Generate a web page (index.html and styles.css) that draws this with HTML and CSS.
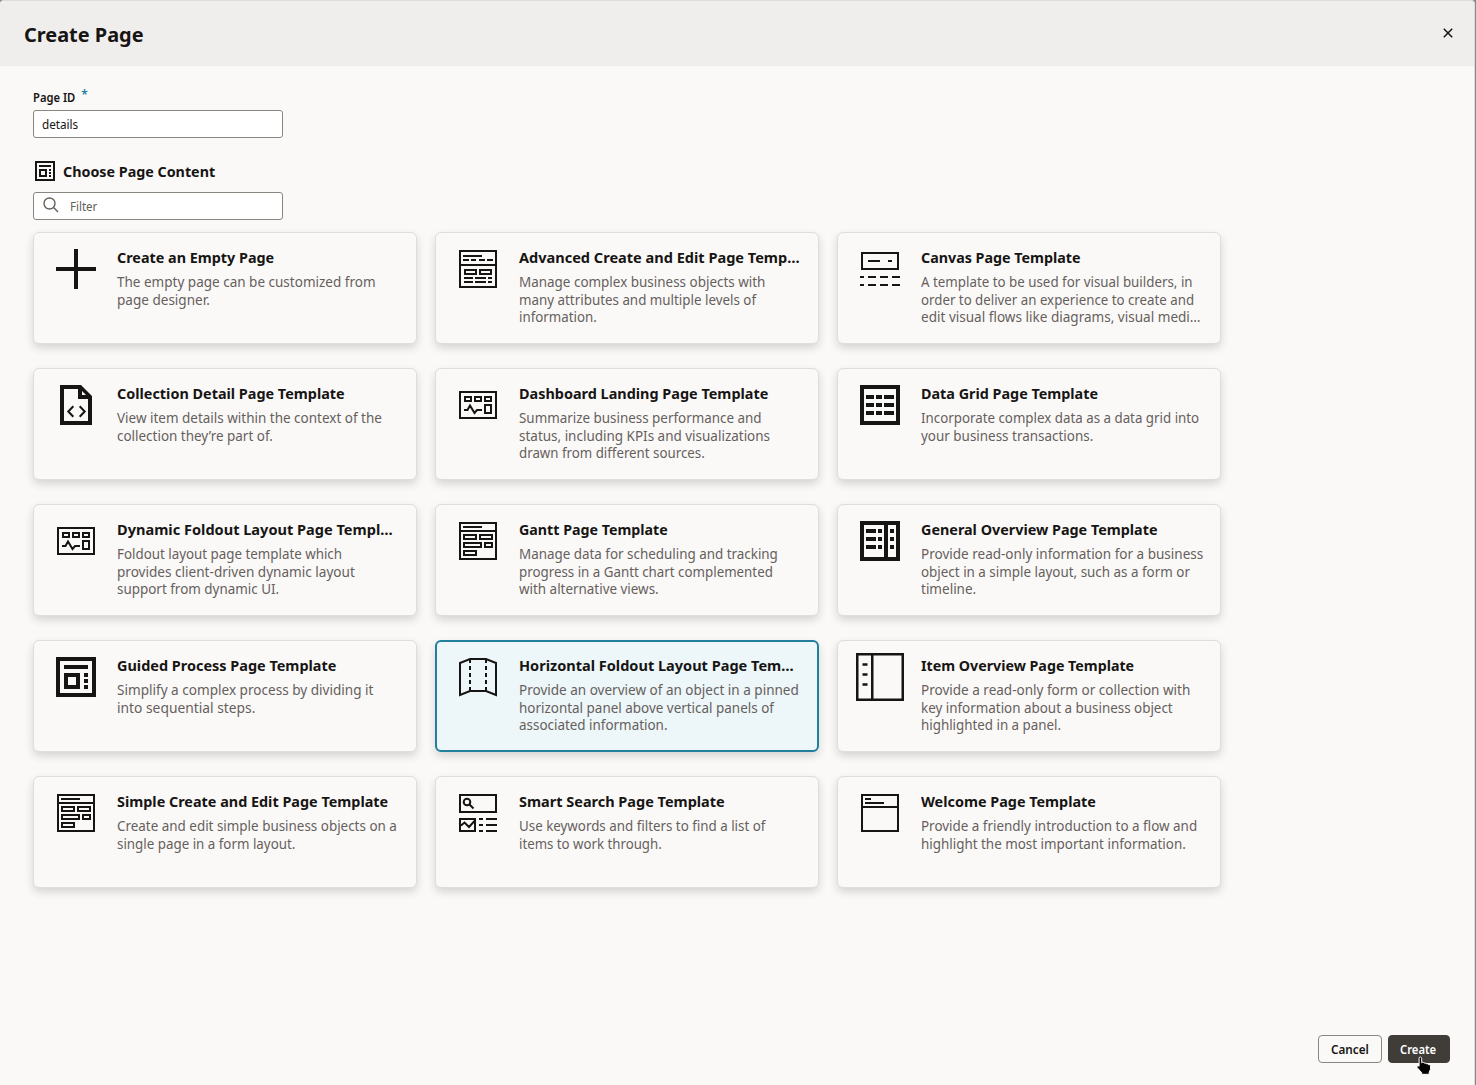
FILE: index.html
```html
<!DOCTYPE html>
<html lang="en">
<head>
<meta charset="utf-8">
<title>Create Page</title>
<link rel="stylesheet" href="styles.css">
</head>
<body>
<svg class="sprite" aria-hidden="true">
  <symbol id="plus" viewBox="0 0 40 40"><path class="f" d="M18 0h4v18h18v4H22v18h-4V22H0v-4h18z"/></symbol>
  <symbol id="advanced" viewBox="0 0 40 40"><path class="s" d="M2 2h36v36H2zM2 16h36M5 7h19M5 11h6M13 11h5M21 11h6M29 11h6M7 21h11v4H7zM22 21h11v4H22zM6 29h9M17 29h11M30 29h4M6 33h9M17 33h11M30 33h4"/></symbol>
  <symbol id="canvas" viewBox="0 0 40 40"><path class="s" d="M2 4h36v16H2zM8 12h12M28 12h4M0 28h4M8 28h8M20 28h8M32 28h8M0 36h4M8 36h8M20 36h8M32 36h8"/></symbol>
  <symbol id="collection" viewBox="0 0 40 40"><path class="f" fill-rule="evenodd" d="M4 0h21l11 11v29H4zM8 4v32h24V14H22V4zM26 6v4h4z"/><path class="s" d="M17.3 21.3l-5 5.2 5 5.2M23.700 21.3l5 5.2-5 5.2"/></symbol>
  <symbol id="dashboard" viewBox="0 0 40 40"><path class="s" d="M2 7h36v26H2zM7 12h6v4H7zM17 12h6v4h-6zM27 12h6v4h-6zM27 20h6v8h-6zM6 25h3.500l2.500-4.500 4.500 7.500 2.500-3h5"/></symbol>
  <symbol id="form" viewBox="0 0 40 40"><path class="s" d="M2 2h36v36H2zM5 6h19M2 10h36M6 14h12v4H6zM22 14h12v4H22zM6 22h17v4H6zM27 22h7v4h-7zM6 30h12v4H6z"/></symbol>
  <symbol id="grid" viewBox="0 0 40 40"><path class="w" d="M2 2h36v36H2zM6 12h8M16 12h6M24 12h10M6 20h8M16 20h6M24 20h10M6 28h8M16 28h6M24 28h10"/></symbol>
  <symbol id="general" viewBox="0 0 40 40"><path class="w" d="M2 2h36v36H2zM26 2v36M6 10h10M18 10h4M30 10h4M6 18h10M18 18h4M30 18h4M6 26h10M18 26h4M30 26h4"/></symbol>
  <symbol id="guided" viewBox="0 0 40 40"><path class="w" d="M2 2h36v36H2zM8 10h24M10 18h12v12H10zM28 18h4M28 24h4M28 30h4"/></symbol>
  <symbol id="foldout" viewBox="0 0 40 40"><path class="s" d="M2 6l10-4h16l10 4v32l-10-4H12L2 38z"/><path class="s" stroke-dasharray="4 3" d="M12 2v32M28 2v32"/></symbol>
  <symbol id="item" viewBox="0 0 48 48"><path class="s thick" d="M1.250 1.250h45.500v45.500H1.250zM16.250 1v46M6.500 11.500h5M6.500 21.500h5M6.500 31.500h5"/></symbol>
  <symbol id="search" viewBox="0 0 40 40"><path class="s" d="M2 2h36v17H2zM2 26h15v12H2zM3 32.500l3.500-3 4.500 4.500 5.500-6M21 26h4M28 26h11M21 32h4M28 32h11M21 38h4M28 38h11M11.500 11.500l4 4"/><circle class="s" cx="9" cy="9" r="3.300"/></symbol>
  <symbol id="welcome" viewBox="0 0 40 40"><path class="s" d="M2 2h36v36H2zM5 6h6M5 10h19M2 14h36"/></symbol>
</svg>

<main class="dialog">
  <header class="dialog-header">
    <h1><span class="fit" data-w="119.500">Create Page</span></h1>
    <button class="close" aria-label="Close"><svg width="10" height="10" viewBox="0 0 10 10"><path class="x" d="M.8.8l8.400 8.400M9.200.8L.8 9.200"/></svg></button>
  </header>

  <div class="dialog-body">
    <label class="field-label"><span class="fit" data-w="42">Page ID</span><span class="required">*</span></label>
    <div class="input"><span class="fit" data-w="36">details</span></div>
    <h2><svg width="20" height="20"><use href="#guided"/></svg><span class="fit" data-w="152.500">Choose Page Content</span></h2>
    <div class="input filter">
      <svg width="16" height="16" viewBox="0 0 16 16"><path class="lens" d="M12 6.500a5.500 5.500 0 1 1-11 0 5.500 5.500 0 0 1 11 0zM10.600 10.600L15 15"/></svg>
      <span class="fit" data-w="27.500">Filter</span>
    </div>
    <section class="cards" id="cards"></section>
  </div>

  <footer class="dialog-footer">
    <button class="btn"><span class="fit" data-w="37.500">Cancel</span></button>
    <button class="btn primary"><span class="fit" data-w="36">Create</span>
      <svg class="cursor" width="16" height="19" viewBox="0 0 16 19"><path d="M3.500 1.200c1-.5 2 0 2.200 1V6.800l.4-.3c.9-.5 1.800 0 2.100.7.800-.5 1.900-.2 2.200.7.800-.4 1.900-.1 2.200.8.900-.2 1.900.3 1.900 1.400v3.300l-1.300 2.600v2.300H5.700v-1.600L1.200 11.700c-.8-1 .3-2.600 1.700-1.700l.2.200V2.200z"/></svg>
    </button>
  </footer>
</main>
<script src="cards.js"></script>
</body>
</html>
```
FILE: styles.css
```css
* { box-sizing: border-box; }
body {
  margin: 0;
  height: 1085px;
  overflow: hidden;
  background: #888;
  color: #161513;
  font-family: "Noto Sans", "Open Sans", sans-serif;
}
.sprite { position: absolute; width: 0; height: 0; }
.f { fill: #161513; }
.s { fill: none; stroke: #161513; stroke-width: 2; }
.w { fill: none; stroke: #161513; stroke-width: 4; }
.thick { stroke-width: 2.5; }
.fit { display: inline-block; white-space: nowrap; transform-origin: 0 50%; }

.dialog {
  width: 1475px;
  height: 1085px;
  display: flex;
  flex-direction: column;
  background: #fbf9f8;
  border-top: 1px solid #dedddc;
  border-right: 1px solid #dcdbda;
  border-radius: 4px 4px 0 0;
  overflow: hidden;
}
.dialog-header {
  height: 65px;
  flex: none;
  display: flex;
  align-items: center;
  justify-content: space-between;
  padding: 0 21px 0 24px;
  background: #f0eeed;
}
h1 { margin: 2px 0 0; font-size: 20px; line-height: 28px; font-weight: 700; }
.close { display: flex; margin-top: -2px; padding: 0; border: 0; background: none; }
.x { stroke: #161513; stroke-width: 1.5; }

.dialog-body { flex: 1; padding: 23px 33px 0; }
.field-label {
  display: flex;
  height: 21px;
  font-size: 12px;
  line-height: 18px;
  font-weight: 600;
}
.required { margin-left: 3px; margin-top: -3px; font-size: 12px; color: #227e9e; }
.input {
  width: 250px;
  height: 28px;
  display: flex;
  align-items: center;
  padding: 0 8px;
  border: 1px solid #8b8580;
  border-radius: 3px;
  background: #fff;
  font-size: 13px;
}
h2 {
  display: flex;
  align-items: center;
  gap: 8px;
  height: 20px;
  margin: 23px 0 11px 2px;
  font-size: 15px;
  line-height: 20px;
  font-weight: 700;
}
.filter { gap: 11px; padding-left: 9px; color: #65605c; }
.filter svg { margin-top: -2px; }
.lens { fill: none; stroke: #65605c; stroke-width: 1.4; }

.cards {
  display: grid;
  grid-template-columns: repeat(3, 384px);
  grid-auto-rows: 112px;
  gap: 24px 18px;
  margin-top: 12px;
}
.card {
  display: flex;
  gap: 21px;
  padding: 16px 0 0 22px;
  border: 1px solid #dfdddb;
  border-radius: 6px;
  background: #fbf9f8;
  box-shadow: 0 4px 8px rgba(22, 21, 19, .16);
}
.card.selected {
  padding: 15px 0 0 21px;
  border: 2px solid #227e9e;
  background: #edf6f9;
}
.icon { flex: none; width: 40px; height: 40px; }
.icon.large { width: 48px; height: 48px; margin: -4px; }
.text { display: flex; flex-direction: column; align-items: flex-start; }
.card h3 { margin: -2px 0 6px; font-size: 15px; line-height: 20px; font-weight: 700; }
.card .line { font-size: 15px; line-height: 17.6px; color: #65605c; }

.dialog-footer {
  display: flex;
  justify-content: flex-end;
  gap: 6px;
  height: 50px;
  padding-right: 24px;
}
.btn {
  position: relative;
  height: 28px;
  width: 64px;
  padding: 1px 0 0 12px;
  border: 1px solid #8b8580;
  border-radius: 4px;
  background: #fbf9f8;
  color: #161513;
  font: 600 12.5px/26px "Noto Sans", sans-serif;
  text-align: left;
}
.btn.primary { width: 62px; padding-left: 11px; border-color: #403c38; background: #403c38; color: #fff; }
.cursor { position: absolute; left: 27px; top: 20px; }
.cursor path { fill: #000; stroke: #fff; stroke-width: 1; }
```
FILE: cards.js
```js
// Each card: icon, title, then description lines; numbers are line widths in px.
const cards = [
  ["plus", "Create an Empty Page", 157, ["The empty page can be customized from", 258.5], ["page designer.", 93]],
  ["advanced", "Advanced Create and Edit Page Temp…", 281, ["Manage complex business objects with", 246.5], ["many attributes and multiple levels of", 237], ["information.", 78]],
  ["canvas", "Canvas Page Template", 160, ["A template to be used for visual builders, in", 272], ["order to deliver an experience to create and", 273.5], ["edit visual flows like diagrams, visual medi…", 280]],
  ["collection", "Collection Detail Page Template", 227.5, ["View item details within the context of the", 265], ["collection they’re part of.", 156]],
  ["dashboard", "Dashboard Landing Page Template", 249, ["Summarize business performance and", 243], ["status, including KPIs and visualizations", 251.5], ["drawn from different sources.", 186]],
  ["grid", "Data Grid Page Template", 177, ["Incorporate complex data as a data grid into", 278], ["your business transactions.", 172]],
  ["dashboard", "Dynamic Foldout Layout Page Templ…", 275.5, ["Foldout layout page template which", 225], ["provides client-driven dynamic layout", 238], ["support from dynamic UI.", 162]],
  ["form", "Gantt Page Template", 149, ["Manage data for scheduling and tracking", 259], ["progress in a Gantt chart complemented", 254], ["with alternative views.", 139.5]],
  ["general", "General Overview Page Template", 236.5, ["Provide read-only information for a business", 282], ["object in a simple layout, such as a form or", 269], ["timeline.", 55]],
  ["guided", "Guided Process Page Template", 219.5, ["Simplify a complex process by dividing it", 256], ["into sequential steps.", 138]],
  ["foldout", "Horizontal Foldout Layout Page Tem…", 275, ["Provide an overview of an object in a pinned", 279.5], ["horizontal panel above vertical panels of", 254.5], ["associated information.", 148.5]],
  ["item", "Item Overview Page Template", 213.5, ["Provide a read-only form or collection with", 269.5], ["key information about a business object", 252], ["highlighted in a panel.", 140.5]],
  ["form", "Simple Create and Edit Page Template", 271.5, ["Create and edit simple business objects on a", 280], ["single page in a form layout.", 178]],
  ["search", "Smart Search Page Template", 205.5, ["Use keywords and filters to find a list of", 246.5], ["items to work through.", 143]],
  ["welcome", "Welcome Page Template", 174.5, ["Provide a friendly introduction to a flow and", 276.5], ["highlight the most important information.", 264.5]]
];

document.getElementById("cards").innerHTML = cards.map(([icon, title, width, ...lines]) => `
  <article class="card${icon === "foldout" ? " selected" : ""}">
    <svg class="icon${icon === "item" ? " large" : ""}"><use href="#${icon}"/></svg>
    <div class="text">
      <h3><span class="fit" data-w="${width}">${title}</span></h3>
      ${lines.map(([text, w]) => `<span class="line fit" data-w="${w}">${text}</span>`).join("")}
    </div>
  </article>`).join("");

document.querySelectorAll(".fit").forEach(el => {
  el.style.transform = `scaleX(${el.dataset.w / el.offsetWidth})`;
});
```
